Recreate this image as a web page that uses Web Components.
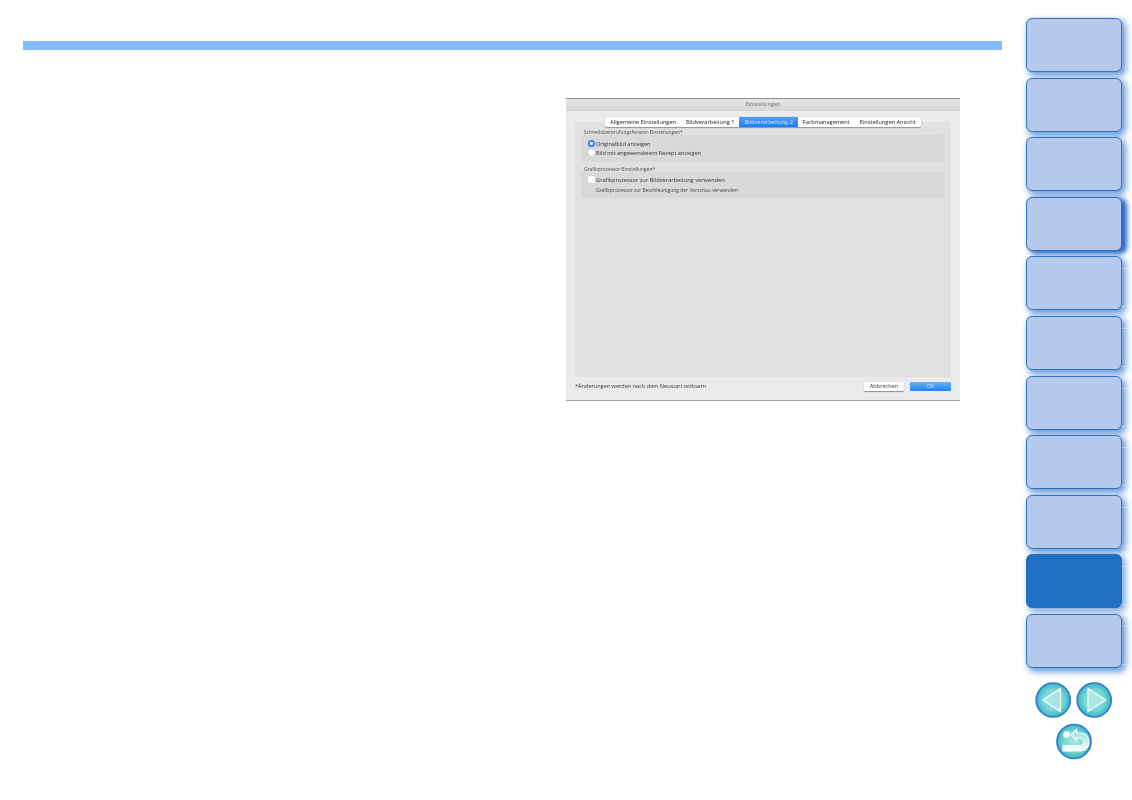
<!DOCTYPE html>
<html lang="de">
<head>
<meta charset="utf-8">
<title>Einstellungen</title>
<style>
html,body{margin:0;padding:0;background:#fff;}
body{font-family:"Open Sans","Liberation Sans",sans-serif;}
</style>
</head>
<body>
<manual-page>
	<prefs-dialog title-text="Einstellungen">
		<dlg-tab>Allgemeine Einstellungen</dlg-tab>
		<dlg-tab>Bildverarbeitung 1</dlg-tab>
		<dlg-tab active>Bildverarbeitung 2</dlg-tab>
		<dlg-tab>Farbmanagement</dlg-tab>
		<dlg-tab>Einstellungen Ansicht</dlg-tab>

		<pref-group slot="groups" label="Schnellüberprüfungsfenster-Einstellungen*" size="27" inset="4">
			<pref-option type="radio" checked>Originalbild anzeigen</pref-option>
			<pref-option type="radio">Bild mit angewendetem Rezept anzeigen</pref-option>
		</pref-group>
		<pref-group slot="groups" label="Grafikprozessor-Einstellungen*" size="26" inset="3">
			<pref-option type="check">Grafikprozessor zur Bildverarbeitung verwenden</pref-option>
			<pref-note>Grafikprozessor zur Beschleunigung der Vorschau verwenden</pref-note>
		</pref-group>
	</prefs-dialog>

	<nav-tab slot="nav"></nav-tab>
	<nav-tab slot="nav"></nav-tab>
	<nav-tab slot="nav"></nav-tab>
	<nav-tab slot="nav" current></nav-tab>
	<nav-tab slot="nav" ruled></nav-tab>
	<nav-tab slot="nav" ruled></nav-tab>
	<nav-tab slot="nav" ruled></nav-tab>
	<nav-tab slot="nav" ruled></nav-tab>
	<nav-tab slot="nav" ruled></nav-tab>
	<nav-tab slot="nav" ruled active></nav-tab>
	<nav-tab slot="nav" ruled></nav-tab>
	<round-buttons slot="nav"></round-buttons>
</manual-page>

<script>
'use strict';

class ManualPage extends HTMLElement{
	constructor(){
		super();
		let shadow = this.attachShadow({mode: 'open'});
		shadow.innerHTML = `<style>
:host{display:grid;grid-template-columns:1026px 106px;width:1132px;height:800px;overflow:hidden;}
main{padding:41px 0 0 23px;}
.bar{width:979px;height:9px;background:#84bbff;}
.figure{margin:48px 0 0 543px;}
nav{padding-top:18px;display:flex;flex-direction:column;gap:5.6px;}
</style>
<main><div class="bar"></div><div class="figure"><slot></slot></div></main>
<nav><slot name="nav"></slot></nav>`;
	}
}

class NavTab extends HTMLElement{
	constructor(){
		super();
		let shadow = this.attachShadow({mode: 'open'});
		shadow.innerHTML = `<style>
:host{display:block;position:relative;box-sizing:border-box;width:96px;height:54px;border:1.5px solid #2a74c9;border-radius:6px;background:#b7c9ea;box-shadow:3px 3px 6px 1px rgba(42,108,198,.68);}
:host([current]){box-shadow:4px 2px 5px 1px rgba(28,92,190,.95);}
:host([active]){background:#216fc2;border-color:#216fc2;box-shadow:3px 3px 6px 1px rgba(38,104,196,.55);}
/* pale rules that run off the tab's right edge */
.rule{display:none;position:absolute;left:94px;width:10px;height:1px;background:rgba(255,255,255,.3);}
:host([ruled]) .rule{display:block;}
.a{top:11px;}
.b{top:49px;}
</style><div class="rule a"></div><div class="rule b"></div>`;
	}
}

class RoundButtons extends HTMLElement{
	constructor(){
		super();
		let shadow = this.attachShadow({mode: 'open'});
		shadow.innerHTML = `<style>
:host{display:block;margin-top:8.5px;width:96px;}
svg{display:block;}
</style>
<svg width="96" height="84" viewBox="0 0 96 84">
	<defs>
		<radialGradient id="fill" cx="50%" cy="50%" r="52%">
			<stop offset="0" stop-color="#a8e8e2"/>
			<stop offset=".6" stop-color="#74d6d4"/>
			<stop offset="1" stop-color="#38aec4"/>
		</radialGradient>
		<linearGradient id="band" x1="0" y1="0" x2="0" y2="1">
			<stop offset="0" stop-color="#8fdfdb"/>
			<stop offset=".6" stop-color="#c8f0ec"/>
			<stop offset="1" stop-color="#ffffff"/>
		</linearGradient>
	</defs>
	<g stroke="#2a7cc8" stroke-width="1.6" fill="url(#fill)">
		<circle cx="27.2" cy="18" r="17"/>
		<circle cx="68.2" cy="18" r="17"/>
		<circle cx="48" cy="59.5" r="17"/>
	</g>
	<g fill="#a9e7e3" stroke="#fff" stroke-width="1.1" stroke-linejoin="miter">
		<path d="M34.5 6.5V29.5L17 18Z"/>
		<path d="M62 6.5V29.5L79.5 18Z"/>
	</g>
	<circle cx="40.5" cy="52.5" r="3.3" fill="#fff"/>
	<path d="M45 53L50.5 47.5V51H55C60 51 63 55 63 60C63 65 59.5 69 55 69H37V63.5H53.5C56.5 63.5 57.5 62 57.5 60C57.5 57.5 56 56 53.5 56H50.5V58.5Z" fill="url(#band)" stroke="#fff" stroke-width="1.1"/>
</svg>`;
	}
}

class PrefsDialog extends HTMLElement{
	constructor(){
		super();
		let shadow = this.attachShadow({mode: 'open'});
		shadow.innerHTML = `<style>
:host{display:flex;flex-direction:column;box-sizing:border-box;width:394px;height:303px;background:#ebebeb;border-top:1px solid #8e8e8e;border-bottom:1px solid #a4a4a4;font-family:"Open Sans","Liberation Sans",sans-serif;font-size:5.57px;color:#333;}
.title{height:12px;flex:none;background:linear-gradient(#e6e6e6,#d6d6d6);text-align:center;line-height:11px;color:#707070;font-size:5.6px;filter:blur(.35px);}
.tabs{display:flex;align-self:center;position:relative;z-index:1;margin-top:6px;height:10px;background:#fff;border-radius:2px;box-shadow:0 .5px 1px rgba(0,0,0,.35);font-size:5.65px;}
.panel{flex:1;margin:-5px 9px 0 9px;padding:7px 7px 0 6px;background:#e1e1e1;display:flex;flex-direction:column;gap:4px;}
.foot{flex:none;height:23px;margin:0 9px;padding-top:4px;box-sizing:border-box;display:flex;align-items:flex-start;justify-content:space-between;}
.note{margin-top:1px;filter:blur(.35px);}
.buttons{display:flex;gap:6px;padding-top:1px;}
.btn{width:40px;height:9px;line-height:9px;text-align:center;border-radius:1px;background:#fff;box-shadow:0 .5px 1px rgba(0,0,0,.4);}
.btn span{filter:blur(.35px);display:inline-block;}
.ok{width:41px;background:linear-gradient(#6cb1fb,#1f83f8);color:#cfe4ff;box-shadow:none;}
</style>
<div class="title">${this.getAttribute('title-text')}</div>
<div class="tabs"><slot></slot></div>
<div class="panel"><slot name="groups"></slot></div>
<div class="foot">
	<div class="note">*Änderungen werden nach dem Neustart wirksam</div>
	<div class="buttons"><div class="btn"><span>Abbrechen</span></div><div class="btn ok"><span>OK</span></div></div>
</div>`;
	}
}

class DlgTab extends HTMLElement{
	constructor(){
		super();
		let shadow = this.attachShadow({mode: 'open'});
		shadow.innerHTML = `<style>
:host{display:block;padding:0 5px;height:10px;line-height:10px;white-space:nowrap;color:#222;font-weight:500;}
:host([active]){background:linear-gradient(#4f9ffa,#1c7ff6);color:#d5e7ff;}
span{display:block;filter:blur(.35px);}
</style><span><slot></slot></span>`;
	}
}

class PrefGroup extends HTMLElement{
	constructor(){
		super();
		let shadow = this.attachShadow({mode: 'open'});
		shadow.innerHTML = `<style>
:host{display:block;}
.label{height:6px;line-height:6px;margin-left:3px;font-size:4.9px;color:#4a4a4a;filter:blur(.35px);white-space:nowrap;}
.box{box-sizing:border-box;height:${this.getAttribute('size')}px;padding:${this.getAttribute('inset')}px 0 0 7px;background:#d9d9d9;border-radius:2px;display:flex;flex-direction:column;}
</style>
<div class="label">${this.getAttribute('label')}</div>
<div class="box"><slot></slot></div>`;
	}
}

class PrefOption extends HTMLElement{
	constructor(){
		super();
		let shadow = this.attachShadow({mode: 'open'});
		let radio = this.getAttribute('type') === 'radio';
		shadow.innerHTML = `<style>
:host{display:flex;align-items:center;gap:1px;height:9px;white-space:nowrap;font-size:${radio ? '5.55px' : '5.7px'};color:#333;}
.mark{box-sizing:border-box;width:7px;height:7px;flex:none;background:#fbfbfb;border-radius:${radio ? '50%' : '1px'};box-shadow:0 0 1px rgba(0,0,0,.3);}
:host([checked]) .mark{background:radial-gradient(circle,#fff 0 1.2px,#2e86f2 1.7px);}
span{filter:blur(.35px);}
</style><div class="mark"></div><span><slot></slot></span>`;
	}
}

class PrefNote extends HTMLElement{
	constructor(){
		super();
		let shadow = this.attachShadow({mode: 'open'});
		shadow.innerHTML = `<style>
:host{display:block;height:11px;line-height:12px;margin-left:8px;font-size:4.95px;white-space:nowrap;color:#444;}
span{filter:blur(.35px);display:block;}
</style><span><slot></slot></span>`;
	}
}

window.customElements.define('manual-page',ManualPage);
window.customElements.define('nav-tab',NavTab);
window.customElements.define('round-buttons',RoundButtons);
window.customElements.define('prefs-dialog',PrefsDialog);
window.customElements.define('dlg-tab',DlgTab);
window.customElements.define('pref-group',PrefGroup);
window.customElements.define('pref-option',PrefOption);
window.customElements.define('pref-note',PrefNote);
</script>
</body>
</html>
